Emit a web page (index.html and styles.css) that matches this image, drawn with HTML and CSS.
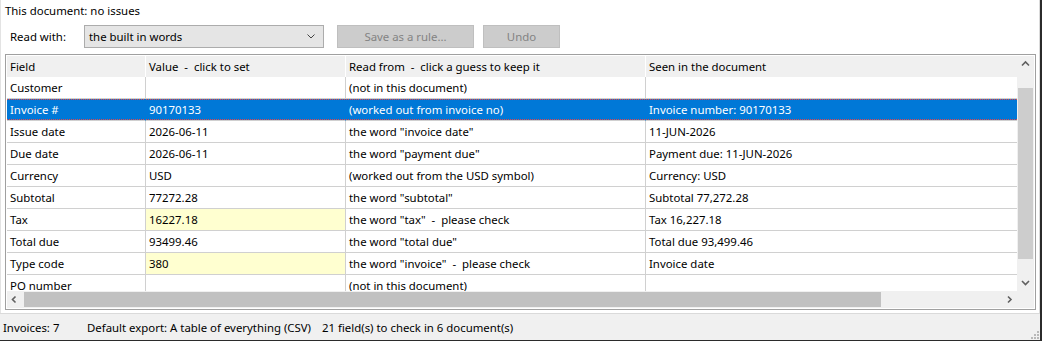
FILE: index.html
```html
<!DOCTYPE html>
<html lang="en">
<head>
  <meta charset="UTF-8" />
  <title>Invoice fields</title>
  <link rel="stylesheet" href="styles.css">
</head>
<body>

  <div class="window">
    <div class="main">
      <div class="doc-state">This document: no issues</div>

      <div class="toolbar">
        <span class="read-label">Read with:</span>
        <div class="combo">
          <span>the built in words</span>
          <svg width="8" height="5" viewBox="0 0 8 5"><polyline points="0.5,0.5 4,4 7.5,0.5" fill="none" stroke="#444" stroke-width="1"/></svg>
        </div>
        <button class="btn btn-rule" disabled>Save as a rule...</button>
        <button class="btn btn-undo" disabled>Undo</button>
      </div>

      <div class="grid-frame">
        <div class="grid">
          <div class="grid-view">
            <table class="fields">
              <colgroup>
                <col class="c-field"><col class="c-value"><col class="c-read"><col class="c-seen">
              </colgroup>
              <thead>
                <tr>
                  <th>Field</th>
                  <th>Value  -  click to set</th>
                  <th>Read from  -  click a guess to keep it</th>
                  <th>Seen in the document</th>
                </tr>
              </thead>
              <tbody>
                <tr><td>Customer</td><td></td><td>(not in this document)</td><td></td></tr>
                <tr class="selected"><td>Invoice #</td><td>90170133</td><td>(worked out from invoice no)</td><td>Invoice number: 90170133</td></tr>
                <tr><td>Issue date</td><td>2026-06-11</td><td>the word "invoice date"</td><td>11-JUN-2026</td></tr>
                <tr><td>Due date</td><td>2026-06-11</td><td>the word "payment due"</td><td>Payment due: 11-JUN-2026</td></tr>
                <tr><td>Currency</td><td>USD</td><td>(worked out from the USD symbol)</td><td>Currency: USD</td></tr>
                <tr><td>Subtotal</td><td>77272.28</td><td>the word "subtotal"</td><td>Subtotal 77,272.28</td></tr>
                <tr><td>Tax</td><td class="check">16227.18</td><td>the word "tax"  -  please check</td><td>Tax 16,227.18</td></tr>
                <tr><td>Total due</td><td>93499.46</td><td>the word "total due"</td><td>Total due 93,499.46</td></tr>
                <tr><td>Type code</td><td class="check">380</td><td>the word "invoice"  -  please check</td><td>Invoice date</td></tr>
                <tr><td>PO number</td><td></td><td>(not in this document)</td><td></td></tr>
              </tbody>
            </table>
          </div>

          <div class="vscroll">
            <div class="sb-btn">
              <svg width="17" height="17" viewBox="0 0 17 17"><polyline points="5,9.5 8.5,6 12,9.5" fill="none" stroke="#606060" stroke-width="1.6"/></svg>
            </div>
            <div class="sb-track"><div class="v-thumb"></div></div>
            <div class="sb-btn">
              <svg width="17" height="17" viewBox="0 0 17 17"><polyline points="5,7 8.5,10.5 12,7" fill="none" stroke="#606060" stroke-width="1.6"/></svg>
            </div>
          </div>

          <div class="hscroll">
            <div class="sb-btn">
              <svg width="17" height="17" viewBox="0 0 17 17"><polyline points="8.5,5.5 5.5,8.5 8.5,11.5" fill="none" stroke="#606060" stroke-width="1.6"/></svg>
            </div>
            <div class="sb-track"><div class="h-thumb"></div></div>
            <div class="sb-btn">
              <svg width="17" height="17" viewBox="0 0 17 17"><polyline points="8,5.5 11,8.5 8,11.5" fill="none" stroke="#606060" stroke-width="1.6"/></svg>
            </div>
          </div>

          <div class="corner"></div>
        </div>
      </div>
    </div>

    <div class="status">
      <span class="panel p-count">Invoices: 7</span>
      <span class="panel p-export">Default export: A table of everything (CSV)</span>
      <span class="panel p-check">21 field(s) to check in 6 document(s)</span>
      <svg class="grip" width="10" height="10" viewBox="0 0 10 10">
        <rect x="7" y="1" width="2" height="2" fill="#b8b8b8"/>
        <rect x="4" y="4" width="2" height="2" fill="#b8b8b8"/>
        <rect x="7" y="4" width="2" height="2" fill="#b8b8b8"/>
        <rect x="1" y="7" width="2" height="2" fill="#b8b8b8"/>
        <rect x="4" y="7" width="2" height="2" fill="#b8b8b8"/>
        <rect x="7" y="7" width="2" height="2" fill="#b8b8b8"/>
      </svg>
    </div>
  </div>

</body>
</html>
```

FILE: styles.css
```css
* {
  box-sizing: border-box;
}

body {
  margin: 0;
  background: #2b2b2b;
  font-family: "Segoe UI", "Noto Sans", sans-serif;
  font-size: 11.4px;
  color: #000;
}

.window {
  width: 1040px;
  height: 340px;
  display: flex;
  flex-direction: column;
  background: #fff;
}

.main {
  height: 313px;
  padding-left: 4px;
  border-left: 1px solid #e3e3e3;
  border-right: 1px solid #dadada;
}

.doc-state {
  height: 20px;
  line-height: 21px;
}

/* toolbar */
.toolbar {
  display: flex;
  align-items: center;
  height: 23px;
  margin-top: 5px;
}

.read-label {
  width: 79px;
  padding-left: 5px;
}

.combo {
  width: 240px;
  height: 23px;
  display: flex;
  align-items: center;
  justify-content: space-between;
  padding: 0 8px 0 4px;
  background: #e5e5e5;
  border: 1px solid #acacac;
}

.btn {
  height: 23px;
  font-family: inherit;
  font-size: 11.4px;
  color: #838383;
  background: #cccccc;
  border: 1px solid #bfbfbf;
  padding: 0;
}

.btn-rule {
  width: 137px;
  margin-left: 13px;
}

.btn-undo {
  width: 77px;
  margin-left: 9px;
}

/* grid */
.grid-frame {
  width: 1031px;
  height: 256px;
  margin-top: 6px;
  border: 1px solid #a0a0a0;
  padding: 1px;
}

.grid {
  display: grid;
  grid-template-columns: 1010px 17px;
  grid-template-rows: 235px 17px;
}

.grid-view {
  overflow: hidden;
}

.fields {
  table-layout: fixed;
  width: 1139px;
  border-collapse: separate;
  border-spacing: 0;
}

.c-field { width: 139px; }
.c-value { width: 200px; }
.c-read { width: 300px; }
.c-seen { width: 500px; }

.fields th,
.fields td {
  height: 21px;
  padding: 0 3px;
  text-align: left;
  font-weight: normal;
  white-space: pre;
  overflow: hidden;
}

.fields th {
  background: #f0f0f0;
  border-right: 1px solid #fff;
}

.fields td {
  height: 22px;
  border-right: 1px solid #d0d0d0;
  border-bottom: 1px solid #d0d0d0;
}

.fields td.check {
  background: #ffffd0;
}

.fields tr.selected td {
  color: #fff;
  background-color: #0078d7;
  border-right-color: #0078d7;
  background-image:
    repeating-linear-gradient(90deg, #e0474c 0 1px, transparent 1px 2px),
    repeating-linear-gradient(90deg, #e0474c 0 1px, transparent 1px 2px);
  background-size: 100% 1px, 100% 1px;
  background-position: top left, bottom left;
  background-repeat: no-repeat;
}

/* scrollbars */
.vscroll,
.hscroll,
.corner {
  background: #f0f0f0;
}

.vscroll {
  display: flex;
  flex-direction: column;
}

.hscroll {
  display: flex;
}

.sb-btn {
  width: 17px;
  height: 17px;
  flex: none;
}

.sb-btn svg {
  display: block;
}

.sb-track {
  flex: 1;
}

.v-thumb {
  width: 15px;
  height: 171px;
  margin: 15px 1px 0;
  background: #cdcdcd;
}

.h-thumb {
  width: 857px;
  height: 15px;
  margin: 1px 0;
  background: #c1c1c1;
}

/* status bar */
.status {
  height: 27px;
  display: flex;
  align-items: center;
  padding-left: 3px;
  background: #f0f0f0;
  border-top: 1px solid #dadada;
}

.panel {
  flex: none;
  white-space: nowrap;
}

.p-count { width: 84px; }
.p-export { width: 235px; }

.grip {
  margin-left: auto;
  align-self: flex-end;
}
```
